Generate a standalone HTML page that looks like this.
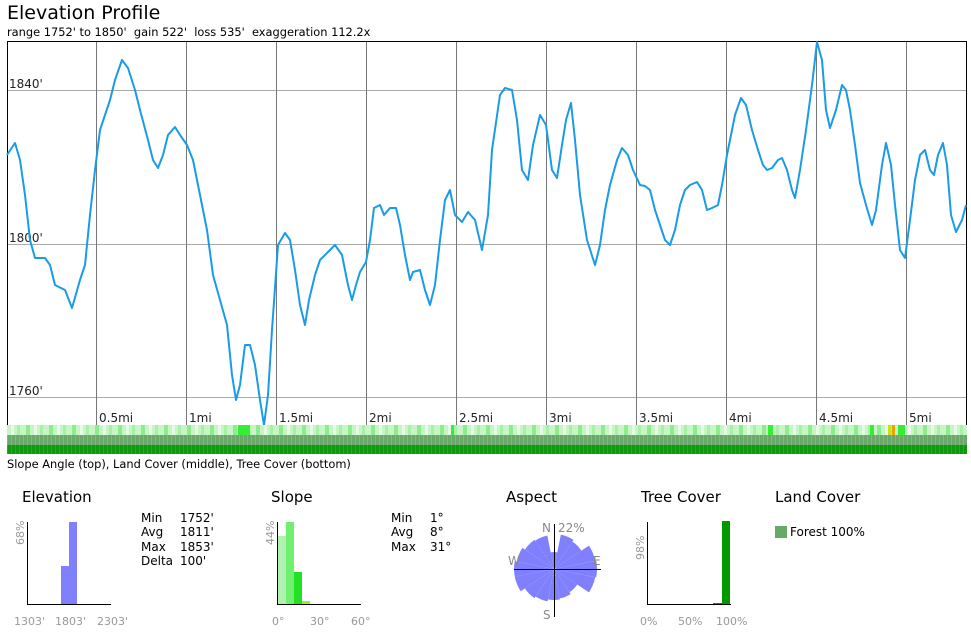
<!DOCTYPE html>
<html><head><meta charset="utf-8"><style>
body{margin:0;width:971px;height:633px;background:#fff;font-family:"DejaVu Sans","Liberation Sans",sans-serif;overflow:hidden;position:relative}
.a{position:absolute;white-space:nowrap}
</style></head><body>
<div class="a" style="left:7px;top:2px;font-size:19px;color:#000">Elevation Profile</div>
<div class="a" style="left:7px;top:25px;font-size:11.4px;color:#000">range 1752' to 1850'&nbsp; gain 522'&nbsp; loss 535'&nbsp; exaggeration 112.2x</div>
<svg class="a" style="left:0;top:0" width="971" height="633" font-family="DejaVu Sans, sans-serif">
<g stroke="#aaa" stroke-width="1">
<line x1="7" y1="90.5" x2="966" y2="90.5"/><line x1="7" y1="244.5" x2="966" y2="244.5"/><line x1="7" y1="397.5" x2="966" y2="397.5"/>
</g>
<g stroke="#777" stroke-width="1">
<line x1="96.5" y1="41" x2="96.5" y2="425"/><line x1="186.5" y1="41" x2="186.5" y2="425"/><line x1="276.5" y1="41" x2="276.5" y2="425"/><line x1="366.5" y1="41" x2="366.5" y2="425"/><line x1="456.5" y1="41" x2="456.5" y2="425"/><line x1="546.5" y1="41" x2="546.5" y2="425"/><line x1="636.5" y1="41" x2="636.5" y2="425"/><line x1="726.5" y1="41" x2="726.5" y2="425"/><line x1="816.5" y1="41" x2="816.5" y2="425"/><line x1="906.5" y1="41" x2="906.5" y2="425"/>
</g>
<path d="M7.5 41V425M7 41.5H966.5V425" fill="none" stroke="#000"/>
<g font-size="12" fill="#222">
<text x="9" y="88">1840'</text><text x="9" y="242">1800'</text><text x="9" y="395">1760'</text>
<text x="99" y="422">0.5mi</text><text x="189" y="422">1mi</text><text x="279" y="422">1.5mi</text><text x="369" y="422">2mi</text><text x="459" y="422">2.5mi</text><text x="549" y="422">3mi</text><text x="639" y="422">3.5mi</text><text x="729" y="422">4mi</text><text x="819" y="422">4.5mi</text><text x="909" y="422">5mi</text>
</g>
<polyline fill="none" stroke="#1a9be8" stroke-width="2" stroke-linejoin="round" points="7,155 15,143 20,160 25,195 30,240 35,258 45,258 50,265 55,285 65,290 72,308 80,280 85,265 90,215 95,170 100,130 110,100 115,80 122,60 128,68 135,90 140,110 148,140 153,160 158,168 163,155 168,135 175,127 180,135 187,145 193,160 200,195 207,230 213,275 220,300 227,325 232,375 236,400 240,385 245,345 250,345 255,365 260,400 264,425 268,395 272,330 278,245 285,233 290,240 295,270 300,305 305,325 309,300 315,275 320,260 328,252 335,245 342,255 348,285 352,300 356,285 360,272 366,262 370,240 374,208 380,205 384,215 390,208 396,208 400,225 405,255 410,280 413,272 420,270 425,290 430,305 435,285 440,240 445,200 450,190 455,215 462,222 468,212 475,220 482,250 488,215 492,150 500,95 505,88 512,90 517,120 522,170 528,180 533,145 540,115 546,125 552,170 557,178 562,145 566,120 571,103 575,140 580,195 587,240 595,265 600,245 605,210 610,185 617,160 622,148 628,155 633,170 640,185 645,186 650,190 655,210 660,225 665,240 670,245 675,230 680,205 685,190 690,185 697,182 702,190 707,210 712,208 718,205 722,185 727,155 735,115 741,98 746,105 752,130 758,150 763,165 767,170 772,168 778,160 782,158 787,170 792,190 795,198 800,170 806,130 812,85 817,42 822,60 826,110 830,128 836,110 842,85 846,90 850,110 855,145 860,183 866,205 872,225 876,210 882,165 886,143 891,165 895,205 900,250 905,258 910,220 915,180 920,155 925,150 930,170 934,175 938,155 943,143 947,165 951,215 956,232 962,220 966,205"/>
<defs>
<pattern id="p1" width="23" height="10" patternUnits="userSpaceOnUse"><rect width="23" height="10" fill="#c6f5c6"/><rect x="3" width="4" height="10" fill="#8eeb8e"/><rect x="11" width="3" height="10" fill="#e6fbe6"/><rect x="17" width="3" height="10" fill="#a8f0a8"/></pattern>
<pattern id="p2" width="4" height="10" patternUnits="userSpaceOnUse"><rect width="4" height="10" fill="#6ca86c"/><rect x="3" width="1" height="10" fill="#80b880"/></pattern>
<pattern id="p3" width="4" height="10" patternUnits="userSpaceOnUse"><rect width="4" height="10" fill="#0c990c"/><rect x="3" width="1" height="10" fill="#2aa82a"/></pattern>
</defs>
<rect x="7" y="425" width="960" height="10" fill="url(#p1)"/>
<g fill="#33ee33"><rect x="238" y="425" width="12" height="10"/><rect x="451" y="425" width="3" height="10"/><rect x="768" y="425" width="5" height="10"/><rect x="898" y="425" width="7" height="10"/><rect x="870" y="425" width="4" height="10"/></g>
<rect x="892" y="425" width="3" height="10" fill="#f0a000"/><rect x="888" y="425" width="3" height="10" fill="#c8e020"/>
<rect x="7" y="435" width="960" height="10" fill="url(#p2)"/>
<rect x="7" y="445" width="960" height="9" fill="url(#p3)"/>
<text x="7" y="468" font-size="11.4" fill="#000">Slope Angle (top), Land Cover (middle), Tree Cover (bottom)</text>
<g font-size="15" fill="#000"><text x="22" y="502">Elevation</text><text x="271" y="502">Slope</text><text x="506" y="502">Aspect</text><text x="641" y="502">Tree Cover</text><text x="775" y="502">Land Cover</text></g>
<rect x="61" y="566" width="8" height="38" fill="#8080ff"/><rect x="69" y="522" width="8" height="82" fill="#8080ff"/>
<path d="M27.5 522V604.5H111" fill="none" stroke="#000"/>
<g font-size="11" fill="#999"><text x="14" y="625">1303'</text><text x="55" y="625">1803'</text><text x="97" y="625">2303'</text>
<text transform="translate(24,545) rotate(-90)">68%</text>
<text x="272" y="625">0°</text><text x="310" y="625">30°</text><text x="351" y="625">60°</text>
<text transform="translate(274,545) rotate(-90)">44%</text>
<text x="640" y="625">0%</text><text x="678" y="625">50%</text><text x="716" y="625">100%</text>
<text transform="translate(644,560) rotate(-90)">98%</text>
</g>
<g font-size="12" fill="#000"><text x="141" y="522">Min</text><text x="141" y="536">Avg</text><text x="141" y="551">Max</text><text x="141" y="565">Delta</text>
<text x="180" y="522">1752'</text><text x="180" y="536">1811'</text><text x="180" y="551">1853'</text><text x="180" y="565">100'</text>
<text x="391" y="522">Min</text><text x="391" y="536">Avg</text><text x="391" y="551">Max</text>
<text x="430" y="522">1°</text><text x="430" y="536">8°</text><text x="430" y="551">31°</text></g>
<rect x="277" y="536" width="9" height="68" fill="#b0f2b0"/><rect x="286" y="522" width="8" height="82" fill="#70f070"/><rect x="294" y="572" width="8" height="32" fill="#22e022"/><rect x="302" y="601" width="8" height="3" fill="#99ee33"/>
<path d="M277.5 522V604.5H361" fill="none" stroke="#000"/>
<g transform="translate(554,569)" fill="#8080ff">
<path d="M0 0L-.195-.981A1 1 0 0 1 .195-.981Z" transform="rotate(0) scale(17)"/>
<path d="M0 0L-.195-.981A1 1 0 0 1 .195-.981Z" transform="rotate(22.5) scale(35)"/>
<path d="M0 0L-.195-.981A1 1 0 0 1 .195-.981Z" transform="rotate(45) scale(33)"/>
<path d="M0 0L-.195-.981A1 1 0 0 1 .195-.981Z" transform="rotate(67.5) scale(42)"/>
<path d="M0 0L-.195-.981A1 1 0 0 1 .195-.981Z" transform="rotate(90) scale(43)"/>
<path d="M0 0L-.195-.981A1 1 0 0 1 .195-.981Z" transform="rotate(112.5) scale(42)"/>
<path d="M0 0L-.195-.981A1 1 0 0 1 .195-.981Z" transform="rotate(135) scale(28)"/>
<path d="M0 0L-.195-.981A1 1 0 0 1 .195-.981Z" transform="rotate(157.5) scale(30)"/>
<path d="M0 0L-.195-.981A1 1 0 0 1 .195-.981Z" transform="rotate(180) scale(31)"/>
<path d="M0 0L-.195-.981A1 1 0 0 1 .195-.981Z" transform="rotate(202.5) scale(33)"/>
<path d="M0 0L-.195-.981A1 1 0 0 1 .195-.981Z" transform="rotate(225) scale(35)"/>
<path d="M0 0L-.195-.981A1 1 0 0 1 .195-.981Z" transform="rotate(247.5) scale(40)"/>
<path d="M0 0L-.195-.981A1 1 0 0 1 .195-.981Z" transform="rotate(270) scale(40)"/>
<path d="M0 0L-.195-.981A1 1 0 0 1 .195-.981Z" transform="rotate(292.5) scale(38)"/>
<path d="M0 0L-.195-.981A1 1 0 0 1 .195-.981Z" transform="rotate(315) scale(35)"/>
<path d="M0 0L-.195-.981A1 1 0 0 1 .195-.981Z" transform="rotate(337.5) scale(34)"/>
</g>
<path d="M514 569.5H601M554.5 524V617" stroke="#000"/>
<g font-size="12" fill="#888"><text x="542" y="532">N</text><text x="558" y="532">22%</text><text x="508" y="565">W</text><text x="593" y="565">E</text><text x="543" y="619">S</text></g>
<rect x="713" y="603" width="9" height="1" fill="#009900"/><rect x="722" y="521" width="8" height="83" fill="#009900"/>
<path d="M647.5 522V604.5H731" fill="none" stroke="#000"/>
<rect x="775" y="526" width="12" height="12" fill="#66aa66"/>
<text x="790" y="536" font-size="12" fill="#000">Forest 100%</text>
</svg>
</body></html>
